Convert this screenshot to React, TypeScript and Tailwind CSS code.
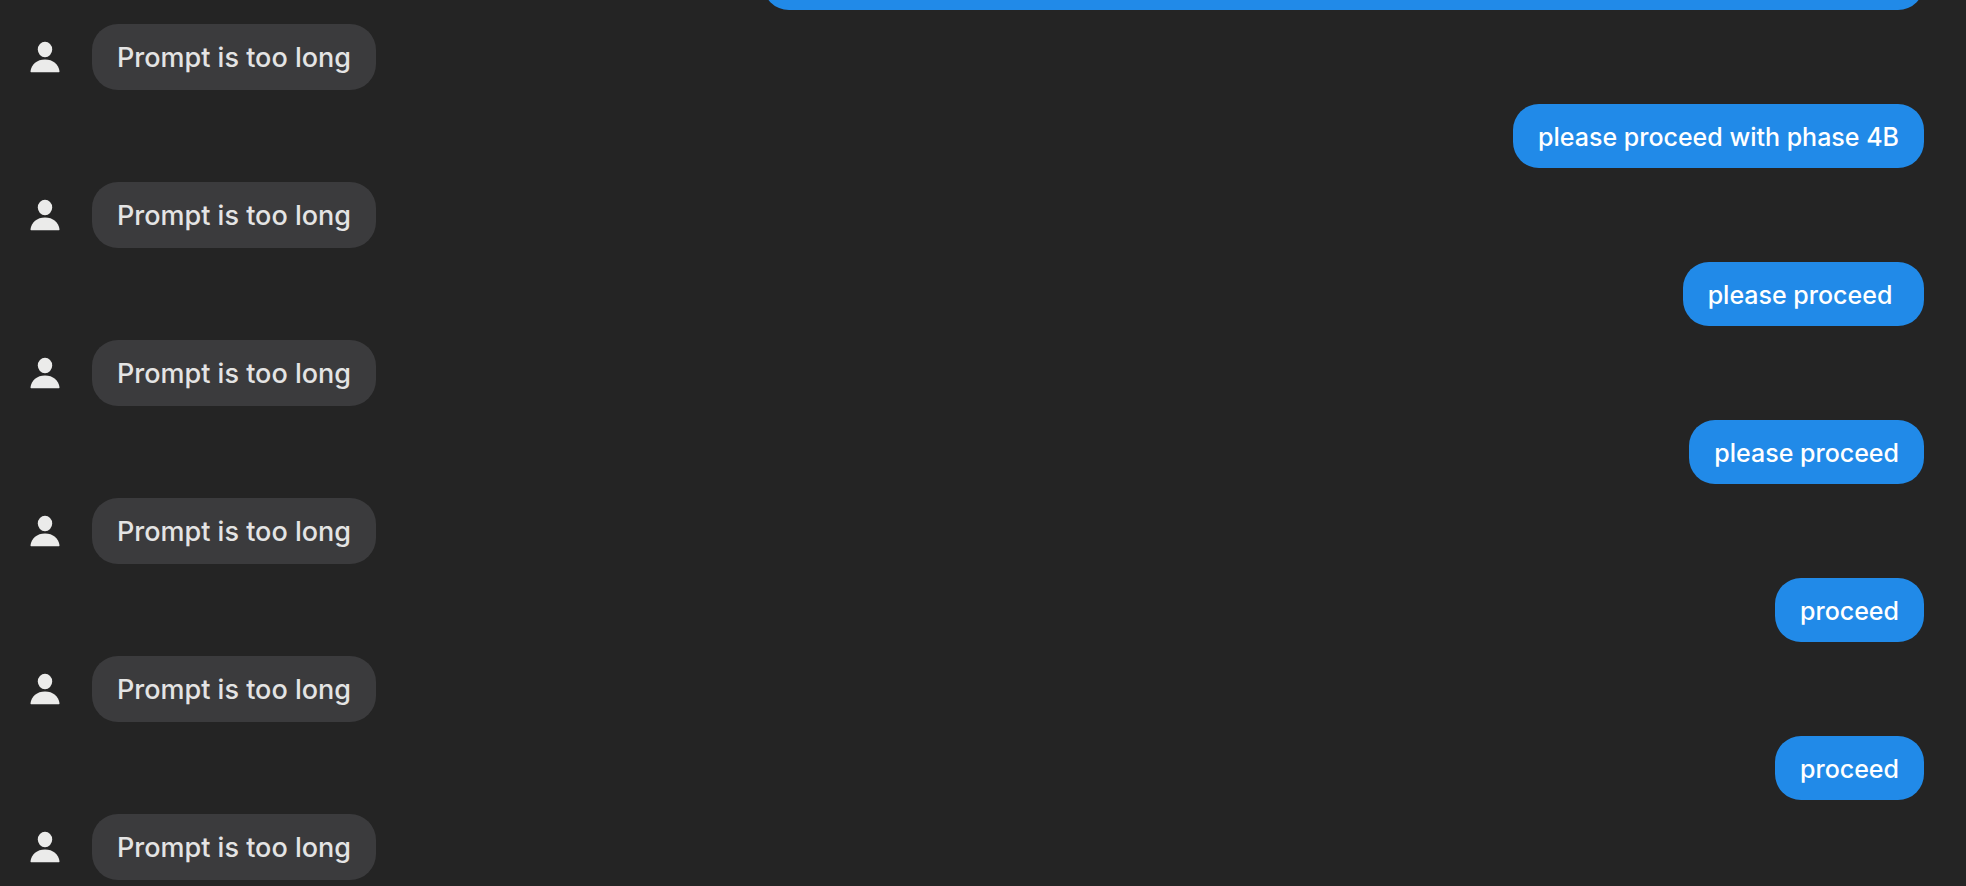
import React from 'react'
import clsx from 'clsx'

interface Message {
  id: number
  from: 'user' | 'assistant'
  text: string
}

const MESSAGES: Message[] = [
  { id: 1, from: 'assistant', text: 'Prompt is too long' },
  { id: 2, from: 'user', text: 'please proceed with phase 4B' },
  { id: 3, from: 'assistant', text: 'Prompt is too long' },
  { id: 4, from: 'user', text: 'please proceed ' },
  { id: 5, from: 'assistant', text: 'Prompt is too long' },
  { id: 6, from: 'user', text: 'please proceed' },
  { id: 7, from: 'assistant', text: 'Prompt is too long' },
  { id: 8, from: 'user', text: 'proceed' },
  { id: 9, from: 'assistant', text: 'Prompt is too long' },
  { id: 10, from: 'user', text: 'proceed' },
  { id: 11, from: 'assistant', text: 'Prompt is too long' },
]

const PersonIcon: React.FC = () => (
  <svg viewBox="0 0 30 32" className="h-8 w-[30px] shrink-0 fill-[#ebebea]" aria-hidden="true">
    <ellipse cx="15" cy="8.5" rx="7.2" ry="7.8" />
    <path d="M1.2 31.2 Q0.4 31.2 0.5 30.2 C1.4 23.4 7 18.6 15 18.6 C23 18.6 28.6 23.4 29.5 30.2 Q29.6 31.2 28.8 31.2 Z" />
  </svg>
)

const Bubble: React.FC<{ message: Message }> = ({ message }) => {
  const mine = message.from === 'user'
  return (
    <li className={clsx('flex items-center gap-8', mine && 'justify-end')}>
      {!mine && <PersonIcon />}
      <p
        className={clsx(
          'whitespace-pre-wrap rounded-[26px] px-[25px] pt-[17px] pb-[15px] font-medium',
          mine
            ? 'bg-[#218ae8] text-[25px] leading-8 text-white'
            : 'bg-[#3b3b3d] text-[27px] leading-[34px] text-[#e4e4e4]',
        )}
      >
        {message.text}
      </p>
    </li>
  )
}

const App: React.FC = () => (
  <main className="flex h-screen flex-col justify-end overflow-hidden bg-[#242424] pr-[42px] pb-1.5 pl-[30px] font-['Inter','Liberation_Sans',sans-serif]">
    <ol className="flex flex-col gap-3.5">
      {/* earlier message, scrolled mostly out of view */}
      <li className="flex justify-end">
        <div className="h-16 w-[61.3%] rounded-[26px] bg-[#218ae8]" />
      </li>
      {MESSAGES.map((m) => (
        <Bubble key={m.id} message={m} />
      ))}
    </ol>
  </main>
)

export default App
